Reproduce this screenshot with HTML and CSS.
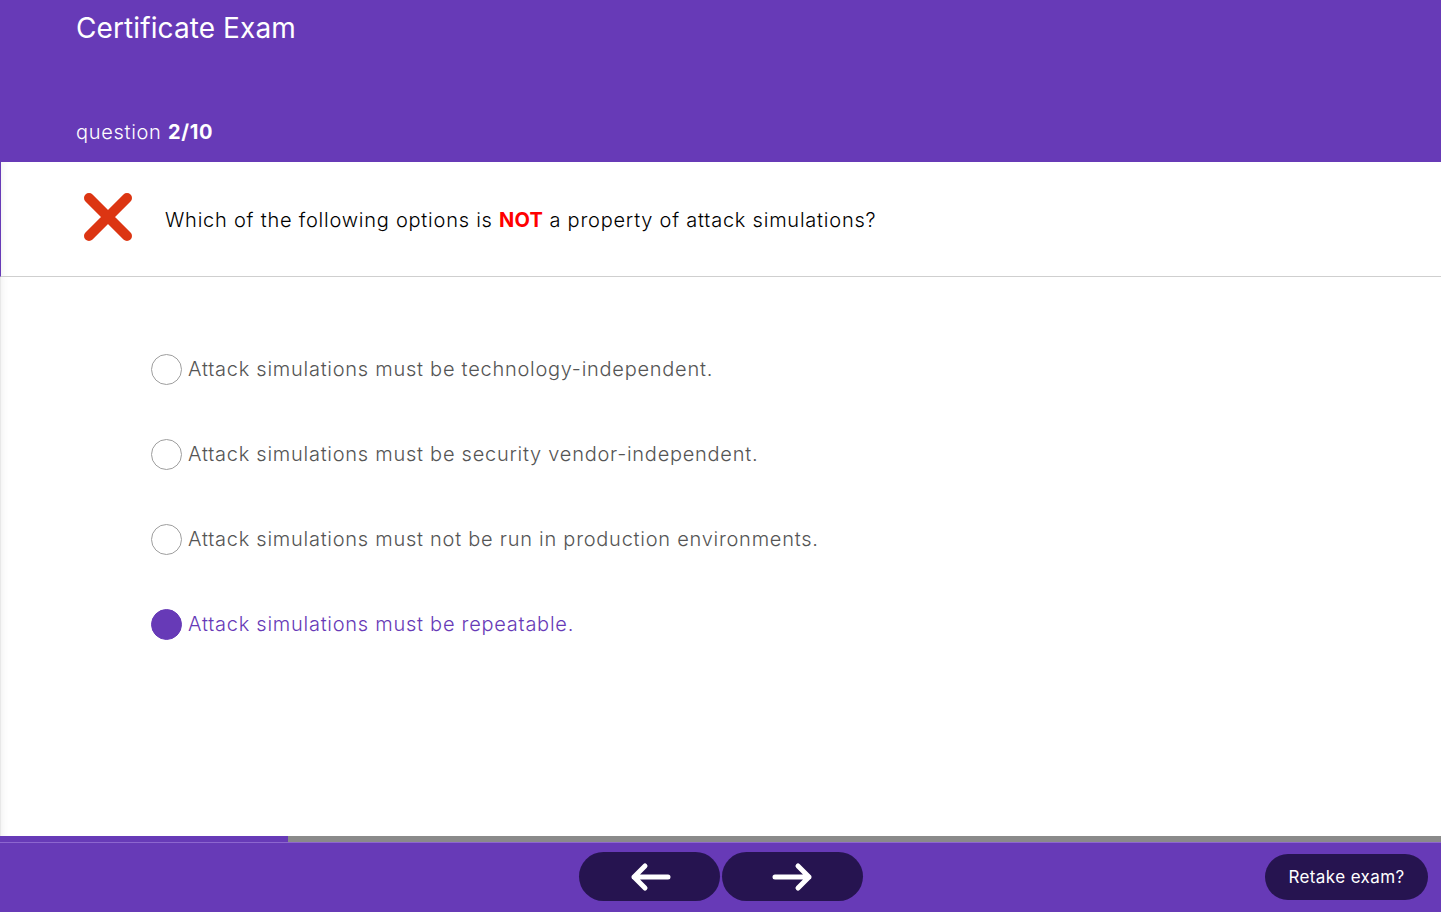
FILE: index.html
```html
<!DOCTYPE html>
<html>
<head>
<meta charset="utf-8">
<link rel="stylesheet" href="styles.css">
</head>
<body>
<div class="app">
  <header class="header">
    <h1 class="title">Certificate Exam</h1>
    <div class="counter">question <b>2/10</b></div>
  </header>
  <main class="main">
    <section class="question">
      <svg class="wrong" width="50" height="50" viewBox="0 0 50 50">
        <path d="M6 6 L44 44 M44 6 L6 44" stroke="#dc3512" stroke-width="10" stroke-linecap="round"/>
      </svg>
      <p class="qtext">Which of the following options is <span class="not">NOT</span> a property of attack simulations?</p>
    </section>
    <ul class="options">
      <li class="option"><span class="radio"></span>Attack simulations must be technology-independent.</li>
      <li class="option"><span class="radio"></span>Attack simulations must be security vendor-independent.</li>
      <li class="option"><span class="radio"></span>Attack simulations must not be run in production environments.</li>
      <li class="option selected"><span class="radio"></span>Attack simulations must be repeatable.</li>
    </ul>
  </main>
  <div class="progress"><div class="progress-fill" style="width:20%"></div></div>
  <footer class="footer">
    <div class="nav">
      <button class="navbtn" aria-label="previous">
        <svg width="44" height="30" viewBox="0 0 44 30"><path d="M40 15 H6 M17 4 L6 15 L17 26" fill="none" stroke="#fff" stroke-width="5" stroke-linecap="round" stroke-linejoin="round"/></svg>
      </button>
      <button class="navbtn" aria-label="next">
        <svg width="44" height="30" viewBox="0 0 44 30"><path d="M4 15 H38 M27 4 L38 15 L27 26" fill="none" stroke="#fff" stroke-width="5" stroke-linecap="round" stroke-linejoin="round"/></svg>
      </button>
    </div>
    <button class="retake">Retake exam?</button>
  </footer>
</div>
</body>
</html>
```
FILE: styles.css
```css
* { box-sizing: border-box; }
html, body { margin: 0; padding: 0; }
body {
  font-family: Inter, "Noto Sans", sans-serif;
  font-weight: 300;
  background: #fff;
  width: 1441px;
  height: 912px;
  overflow: hidden;
}
.app {
  display: flex;
  flex-direction: column;
  height: 912px;
}
.header {
  background: #673ab7;
  color: #fff;
  height: 162px;
  padding: 10px 76px 17px;
  display: flex;
  flex-direction: column;
  justify-content: space-between;
}
.title {
  margin: 0;
  font-weight: 400;
  font-size: 28px;
  line-height: 36px;
  letter-spacing: 0.1px;
}
.counter {
  font-size: 20px;
  line-height: 26px;
  letter-spacing: 0.7px;
}
.counter b { font-weight: 700; }
.main {
  flex: 1;
  border-left: 1px solid #e8e8e8;
  box-shadow: inset 8px 0 8px -8px rgba(0,0,0,0.08);
}
.question {
  height: 115px;
  border-bottom: 1px solid #cfcfcf;
  display: flex;
  align-items: center;
  padding-left: 82px;
  gap: 32px;
  border-left: 1px solid #673ab7;
  margin-left: -1px;
}
.wrong { display: block; margin-top: -4px; }
.qtext {
  margin: 0;
  font-size: 20px;
  color: #000;
  letter-spacing: 0.77px;
  padding-top: 2px;
}
.not { color: #ff0000; font-weight: 700; letter-spacing: 0.2px; }
.options {
  list-style: none;
  margin: 0;
  padding: 77px 0 0 150px;
  display: flex;
  flex-direction: column;
  gap: 55px;
}
.option {
  display: flex;
  align-items: center;
  gap: 6px;
  height: 30px;
  font-size: 20px;
  color: #555;
  letter-spacing: 0.74px;
}
.radio {
  width: 31px;
  height: 31px;
  border-radius: 50%;
  border: 1.5px solid #9e9e9e;
  flex: none;
}
.option.selected { color: #673ab7; }
.option.selected .radio { background: #673ab7; border-color: #673ab7; }
.progress {
  height: 6px;
  background: #8a8a8a;
}
.progress-fill {
  height: 100%;
  background: #673ab7;
}
.footer {
  height: 70px;
  background: #673ab7;
  border-top: 1px solid #8d66cf;
  position: relative;
  display: flex;
  align-items: flex-start;
  justify-content: center;
  padding-top: 9px;
}
.nav {
  display: flex;
  gap: 2px;
  margin-left: 1px;
}
.navbtn {
  width: 141px;
  height: 49px;
  border: none;
  border-radius: 25px;
  background: #261450;
  display: flex;
  align-items: center;
  justify-content: center;
  cursor: pointer;
  padding: 0;
}
.retake {
  position: absolute;
  right: 13px;
  top: 11px;
  width: 163px;
  height: 46px;
  border: none;
  border-radius: 23px;
  background: #261450;
  color: #fff;
  font-family: Inter, "Noto Sans", sans-serif;
  font-weight: 400;
  font-size: 17px;
  letter-spacing: 0.4px;
}
```
